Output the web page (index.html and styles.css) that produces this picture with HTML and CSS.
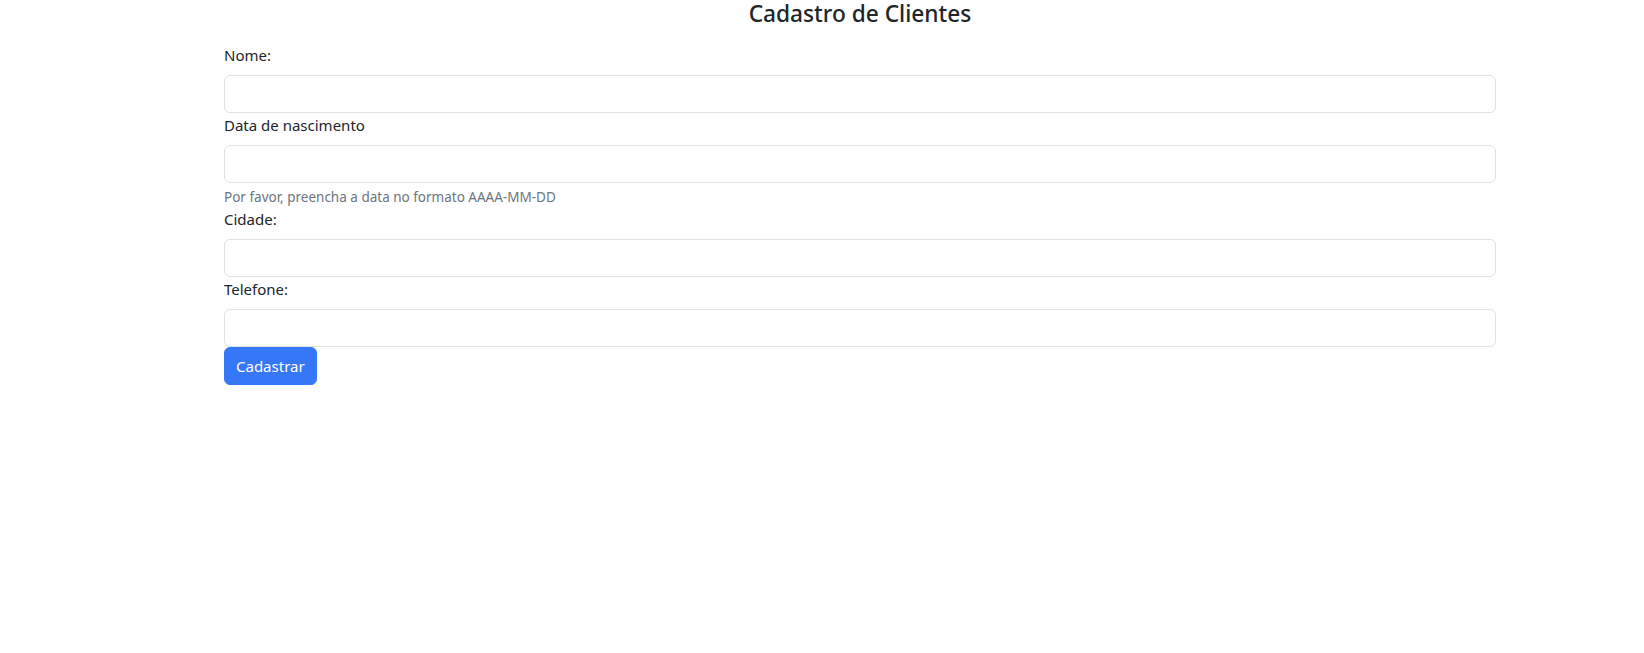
FILE: index.html
```html
<!DOCTYPE html>
<html lang="pt-BR">
<head>
<meta charset="utf-8">
<title>Cadastro de Clientes</title>
<link rel="stylesheet" href="styles.css">
</head>
<body>
<div class="container">
  <h4 class="title">Cadastro de Clientes</h4>
  <form class="form">
    <label class="label" for="nome">Nome:</label>
    <input class="input" id="nome" type="text">
    <label class="label" for="nasc">Data de nascimento</label>
    <input class="input" id="nasc" type="text">
    <div class="hint">Por favor, preencha a data no formato AAAA-MM-DD</div>
    <label class="label" for="cidade">Cidade:</label>
    <input class="input" id="cidade" type="text">
    <label class="label" for="tel">Telefone:</label>
    <input class="input" id="tel" type="text">
    <button class="btn" type="button">Cadastrar</button>
  </form>
</div>
</body>
</html>
```

FILE: styles.css
```css
html, body {
  margin: 0;
  padding: 0;
  background: #ffffff;
}
body {
  font-family: "Noto Sans", "Open Sans", sans-serif;
  font-size: 16px;
  line-height: 1.5;
  color: #212529;
}
.container {
  width: 1272px;
  margin-left: 224px;
}
.title {
  margin: 0;
  height: 43px;
  font-size: 22.7px;
  font-weight: 500;
  line-height: 28px;
  text-align: center;
}
.form {
  display: flex;
  flex-direction: column;
  align-items: flex-start;
}
.label {
  display: block;
  font-size: 15px;
  line-height: 24px;
  margin-bottom: 8px;
}
.input {
  display: block;
  width: 100%;
  height: 38px;
  box-sizing: border-box;
  border: 1px solid #dee2e6;
  border-radius: 6px;
  padding: 6px 12px;
  font: inherit;
  background: #fff;
  outline: none;
}
.hint {
  margin-top: 4px;
  font-size: 13.5px;
  line-height: 20px;
  color: #6c757d;
}
.btn {
  height: 38px;
  box-sizing: border-box;
  padding: 0 11px;
  border: 1px solid #3677f8;
  border-radius: 6px;
  background: #3677f8;
  color: #fff;
  font-family: inherit;
  font-size: 15px;
  line-height: 24px;
  cursor: pointer;
}
```
